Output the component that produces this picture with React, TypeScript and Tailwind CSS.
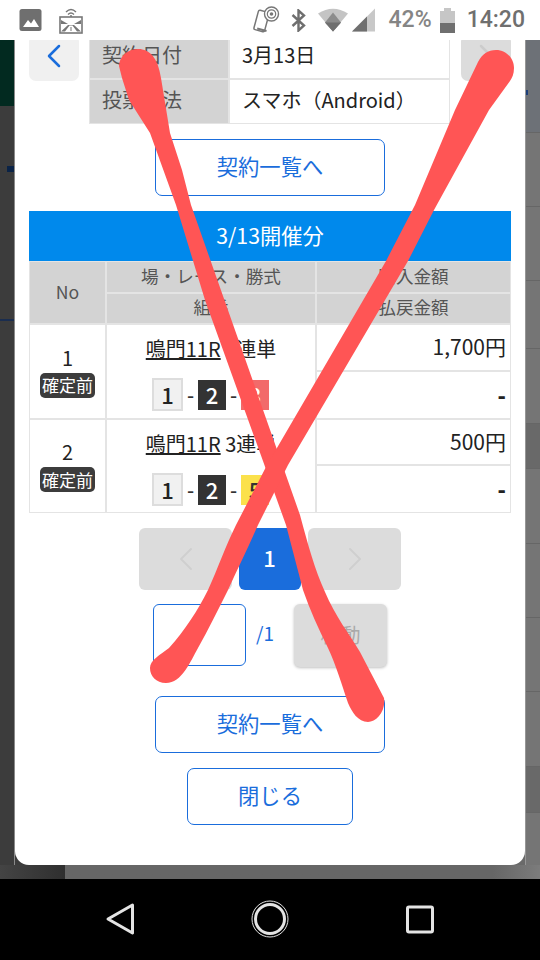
import React from 'react';
import { ChevronLeft, ChevronRight } from 'lucide-react';

const btnCls =
  'flex items-center justify-center h-[57px] pb-[3px] border-[1.5px] border-[#1a6ddc] rounded-[7px] bg-white text-[#1a6ddc] text-[21.3px] mx-auto';

function ImageIcon() {
  return (
    <svg width="23" height="24" viewBox="0 0 23 24">
      <rect x="0.5" y="1" width="22" height="22" rx="2.5" fill="#6f6f6f" />
      <path d="M4 19 L9 12 L12 15.5 L15 11 L20 19 Z" fill="#fff" />
    </svg>
  );
}

function CastIcon() {
  return (
    <svg width="24" height="27" viewBox="0 0 24 27">
      <path d="M7 5 Q12 0 17 5 M9 7.5 Q12 4.5 15 7.5" stroke="#777" strokeWidth="1.4" fill="none" />
      <circle cx="12" cy="9" r="1" fill="#777" />
      <rect x="1" y="10" width="22" height="16" fill="#fff" stroke="#777" strokeWidth="1.6" />
      <path d="M2 13 L9 17 L2 17 Z M22 13 L15 17 L22 17 Z" fill="#777" />
      <path d="M2 24.5 L9 18 L15 18 L22 24.5 L18 24.5 L13.5 18.5 L10.5 18.5 L6 24.5 Z" fill="#777" />
      <path d="M11.5 20 h1 v4 h-1 Z" fill="#777" />
    </svg>
  );
}

function PhoneNfcIcon() {
  return (
    <svg width="28" height="28" viewBox="0 0 28 28">
      <rect x="4" y="5" width="11" height="20" rx="1.5" transform="rotate(15 9.5 15)" fill="none" stroke="#777" strokeWidth="1.5" />
      <path d="M5.2 22.5 L14.5 25" stroke="#777" strokeWidth="2" />
      <circle cx="19.5" cy="8" r="7" fill="#fff" stroke="#777" strokeWidth="1.4" />
      <circle cx="19.5" cy="8" r="4.2" fill="none" stroke="#777" strokeWidth="1.2" />
      <circle cx="19.5" cy="8" r="1.8" fill="#777" />
    </svg>
  );
}

function BluetoothIcon() {
  return (
    <svg width="15" height="23" viewBox="0 0 15 23">
      <path d="M1.5 6 L13 16.5 L7.5 21.5 L7.5 1.5 L13 6.5 L1.5 17" fill="none" stroke="#6f6f6f" strokeWidth="2.4" />
    </svg>
  );
}

function WifiIcon() {
  return (
    <svg width="30" height="24" viewBox="0 0 30 24">
      <path d="M0 5.5 Q15 -4 30 5.5 L15 23.5 Z" fill="#c4c4c4" />
      <path d="M15 4.5 L7 14.5 L15 23.5 L23 14.5 Z" fill="#8c8c8c" />
      <path d="M7 14.5 L23 14.5 L15 23.5 Z" fill="#6f6f6f" />
    </svg>
  );
}

function SignalIcon() {
  return (
    <svg width="23" height="24" viewBox="0 0 23 24">
      <path d="M0 23.5 L23 0.5 L23 23.5 Z" fill="#c8c8c8" />
      <path d="M0 23.5 L15 8.5 L15 23.5 Z" fill="#6f6f6f" />
    </svg>
  );
}

function BatteryIcon() {
  return (
    <svg width="15" height="25" viewBox="0 0 15 25">
      <path d="M4 0 h7 v3 h4 v22 h-15 v-22 h4 Z" fill="#c6c6c6" />
      <rect x="0" y="15" width="15" height="10" fill="#6f6f6f" />
    </svg>
  );
}

function StatusBar() {
  return (
    <div className="h-[40px] shrink-0 bg-white flex items-center justify-between pl-[19px] pr-[15px]">
      <div className="flex items-center gap-[17px]">
        <ImageIcon />
        <CastIcon />
      </div>
      <div className="flex items-center font-['Roboto',sans-serif] font-medium">
        <PhoneNfcIcon />
        <div className="ml-[11px]">
          <BluetoothIcon />
        </div>
        <div className="ml-[12px]">
          <WifiIcon />
        </div>
        <div className="ml-[4px]">
          <SignalIcon />
        </div>
        <span className="ml-[14px] text-[23px] text-[#858585]">42%</span>
        <div className="ml-[8px]">
          <BatteryIcon />
        </div>
        <span className="ml-[12px] text-[23px] text-[#6f6f6f]">14:20</span>
      </div>
    </div>
  );
}

function HeadCell({ children, cls = 'pb-[2px]' }: { children: React.ReactNode; cls?: string }) {
  return <div className={`bg-[#d3d3d3] text-[#555] text-[17.6px] flex items-center justify-center ${cls}`}>{children}</div>;
}

function NumBox({ n, cls }: { n: number; cls: string }) {
  return <span className={`flex items-center justify-center ${cls}`}>{n}</span>;
}

function BetRow({ no, last, lastCls, amount, rowCls }: { no: number; last: number; lastCls: string; amount: string; rowCls: string }) {
  return (
    <>
      <div className={`bg-white flex flex-col items-center justify-center ${rowCls}`}>
        <span className="text-[20px] leading-[24px] text-[#222]">{no}</span>
        <span className="mt-[3px] w-[55px] h-[25px] rounded-[5px] bg-[#3c3c3c] text-white text-[17px] flex items-center justify-center">確定前</span>
      </div>
      <div className={`bg-white flex flex-col items-center pt-[10px] ${rowCls}`}>
        <div className="text-[20px] leading-[28px] text-[#222] whitespace-nowrap">
          <span className="underline">鳴門11R</span> 3連単
        </div>
        <div className="mt-[15px] mr-[1px] flex items-center text-[22px] font-medium h-[33px]">
          <NumBox n={1} cls="w-[31px] h-[33px] bg-[#f1f1f1] border-2 border-[#ddd] text-[#222]" />
          <span className="w-[15px] text-center text-[20px] text-[#333]">-</span>
          <NumBox n={2} cls="w-[28px] h-[30px] bg-[#333] text-white" />
          <span className="w-[15px] text-center text-[20px] text-[#333]">-</span>
          <NumBox n={last} cls={`w-[28px] h-[30px] ${lastCls}`} />
        </div>
      </div>
      <div className="bg-white flex items-center justify-end pr-[4px] pb-[1px] text-[21px] text-[#222]">{amount}</div>
      <div className="bg-white flex items-center justify-end pr-[4px] pb-[2px] text-[22px] font-black text-[#222]">-</div>
    </>
  );
}

function RightStrip() {
  // faint rows of the page behind the dialog
  const rows: [number, string][] = [
    [74, ''],
    [74, ''],
    [68, ''],
    [75, ''],
    [45, 'bg-[#696969]'],
    [75, ''],
    [74, ''],
    [74, ''],
    [75, ''],
    [46, 'bg-[#696969]'],
    [53, ''],
  ];
  return (
    <div className="w-[15px] shrink-0 bg-[#757575] border-l border-[#969696]">
      <div className="h-[92px] bg-[#6d7177] pt-[50px]">
        <div className="w-[2px] h-[5px] bg-[#1c3f7a]" />
      </div>
      {rows.map(([h, bg], i) => (
        <div key={i} className={`border-t border-[#666] ${bg}`} style={{ height: h }} />
      ))}
    </div>
  );
}

function Modal() {
  return (
    <div className="w-[510px] shrink-0 h-full bg-white rounded-b-[14px] overflow-hidden px-[14px]">
      <div className="flex items-start justify-between -mt-[5px]">
        <div className="w-[50px] h-[46px] pb-[4px] bg-[#f0f0f0] rounded-[7px] flex items-center justify-center">
          <ChevronLeft className="w-[40px] h-[40px] text-[#1a6ddc]" strokeWidth={1.5} />
        </div>
        <div className="w-[361px] -ml-[1px] grid grid-cols-[138px_1fr] grid-rows-[42px_43px] gap-[2px] p-[1px] bg-[#e4e4e4] text-[20px]">
          <div className="bg-[#d3d3d3] text-[#555] flex items-center pl-[12px] pb-[4px]">契約日付</div>
          <div className="bg-white text-[#222] flex items-center pl-[12px] pb-[4px]">3月13日</div>
          <div className="bg-[#d3d3d3] text-[#555] flex items-center pl-[12px] pb-[3px]">投票方法</div>
          <div className="bg-white text-[#222] flex items-center pl-[12px] pb-[3px]">スマホ（Android）</div>
        </div>
        <div className="w-[50px] h-[46px] pb-[4px] bg-[#dcdcdc] rounded-[7px] flex items-center justify-center">
          <ChevronRight className="w-[40px] h-[40px] text-[#ccc]" strokeWidth={1.5} />
        </div>
      </div>

      <div className={`${btnCls} w-[230px] mt-[15px]`}>契約一覧へ</div>

      <div className="mt-[15px] h-[50px] pb-[3px] bg-[#0089ec] text-white text-[21.3px] flex items-center justify-center">3/13開催分</div>
      <div className="grid grid-cols-[75px_208px_193px] grid-rows-[30px_29px_45px_46px_44px_46px] gap-[2px] p-[1px] bg-[#e4e4e4]">
        <HeadCell cls="row-span-2 pb-[1px]">No</HeadCell>
        <HeadCell>場・レース・勝式</HeadCell>
        <HeadCell>購入金額</HeadCell>
        <HeadCell>組番</HeadCell>
        <HeadCell>払戻金額</HeadCell>
        <BetRow no={1} last={3} lastCls="bg-[#f26a6a] text-white" amount="1,700円" rowCls="row-span-2" />
        <BetRow no={2} last={5} lastCls="bg-[#fbe14b] text-[#333]" amount="500円" rowCls="row-span-2" />
      </div>

      <div className="mt-[15px] flex justify-center gap-[7px]">
        <div className="w-[93px] h-[62px] bg-[#dcdcdc] rounded-[6px] flex items-center justify-center">
          <ChevronLeft className="w-[40px] h-[40px] text-[#cfcfcf]" strokeWidth={1.2} />
        </div>
        <div className="w-[62px] h-[62px] pb-[3px] pr-[1px] bg-[#1a6ddc] rounded-[6px] flex items-center justify-center text-white text-[22px] font-medium">1</div>
        <div className="w-[93px] h-[62px] bg-[#dcdcdc] rounded-[6px] flex items-center justify-center">
          <ChevronRight className="w-[40px] h-[40px] text-[#cfcfcf]" strokeWidth={1.2} />
        </div>
      </div>

      <div className="mt-[14px] flex items-start justify-center">
        <div className="w-[93px] h-[62px] border-[1.5px] border-[#1a6ddc] rounded-[6px]" />
        <span className="ml-[10px] w-[16px] h-[62px] pb-[3px] flex items-center text-[19px] text-[#1a6ddc]">/1</span>
        <div className="ml-[22px] w-[93px] h-[63px] pb-[2px] bg-[#dcdcdc] rounded-[6px] shadow-[0_1px_3px_rgba(0,0,0,0.25)] flex items-center justify-center text-[20px] text-[#aaa]">移動</div>
      </div>

      <div className={`${btnCls} w-[230px] mt-[29px]`}>契約一覧へ</div>
      <div className={`${btnCls} w-[166px] mt-[15px]`}>閉じる</div>
    </div>
  );
}

function NavBar() {
  return (
    <div className="h-[81px] shrink-0 bg-black relative">
      <svg width="540" height="81" viewBox="0 0 540 81" className="block">
        <path d="M132.5 26 L108 40 L132.5 54 Z" fill="none" stroke="#e4e4e4" strokeWidth="3" strokeLinejoin="round" />
        <circle cx="270" cy="40" r="14.5" fill="none" stroke="#e4e4e4" strokeWidth="3" />
        <circle cx="270" cy="40" r="18" fill="none" stroke="#e4e4e4" strokeWidth="1" />
        <rect x="407.5" y="28" width="25" height="25" rx="1.5" fill="none" stroke="#e4e4e4" strokeWidth="3" />
      </svg>
    </div>
  );
}

function RedCross() {
  return (
    <svg width="540" height="960" viewBox="0 0 540 960" className="absolute inset-0 pointer-events-none">
      <path
        fill="#ff5555"
        d="M119 66 C119 56 128 49 138 49 C150 49 158 58 161 78 L170 133 L182 170 L191 205 L300 515 C308 545 315 570 325 592 C335 616 350 635 360 652 L384 698 C386 712 376 722 368 722 C358 722 352 712 348 703 C342 685 336 665 328 648 C318 628 310 610 303 590 L286 525 L205 300 L176 205 L150 133 L129 100 L122 78 Z"
      />
      <path
        fill="#ff5555"
        d="M478 62 C482 54 488 50 496 50 C506 50 514 58 514 68 C514 74 512 78 510 81 L489 110 L434 210 L408 261 L288 465 L258 525 C248 548 238 568 228 590 C218 610 208 630 198 648 C190 662 182 683 166 683 C156 683 150 676 150 668 C150 660 160 655 169 648 C185 630 198 610 208 590 C218 568 226 545 236 525 L267 465 L386 261 L415 205 L455 110 Z"
      />
    </svg>
  );
}

export default function App() {
  return (
    <div className="relative w-[540px] h-[960px] overflow-hidden flex flex-col font-['Noto_Sans_CJK_JP',sans-serif]">
      <StatusBar />
      <div className="flex h-[825px] shrink-0 bg-[linear-gradient(90deg,#3c3c3c_50%,#6a6a6a_50%)]">
        <div className="w-[15px] shrink-0 bg-[#3c3c3c] border-r border-[#8a8a8a]">
          <div className="h-[66px] bg-[#022a20]" />
          <div className="ml-[7px] mt-[60px] h-[6px] bg-[#0a2347]" />
          <div className="mt-[147px] h-[2px] bg-[#1a2d4f]" />
        </div>
        <Modal />
        <RightStrip />
      </div>
      <div className="h-[14px] shrink-0 flex">
        <div className="w-[65px] bg-gradient-to-r from-[#444] to-[#2f2f2f]" />
        <div className="flex-1 bg-gradient-to-r from-[#666] via-[#666] via-90% to-[#7c7c7c]" />
      </div>
      <NavBar />
      <RedCross />
    </div>
  );
}
